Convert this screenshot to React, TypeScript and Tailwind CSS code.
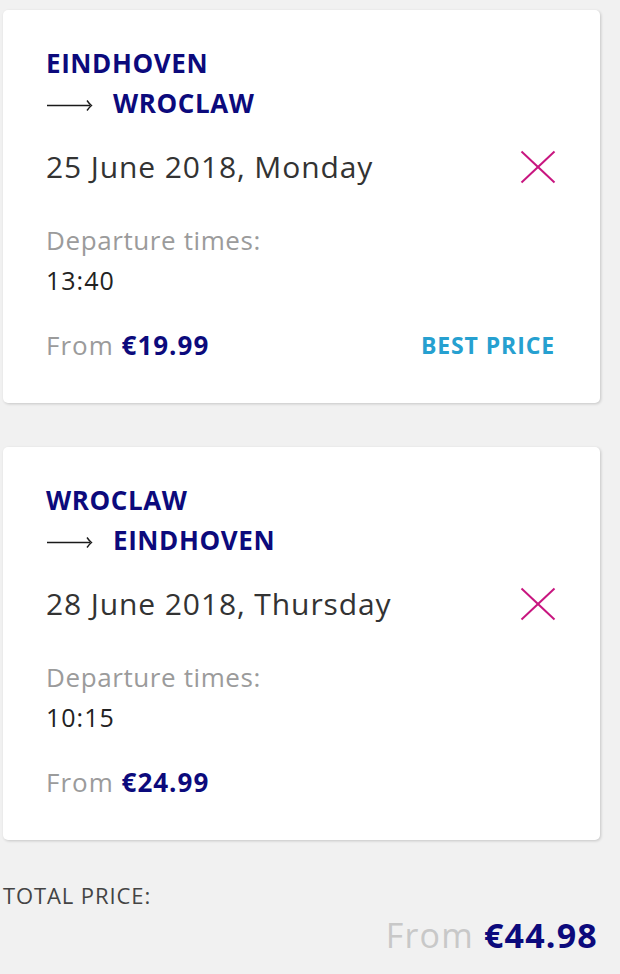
import React from "react";

function Arrow() {
  return (
    <svg width="47" height="14" viewBox="0 0 47 14" className="mr-[20px] shrink-0 mt-[4px]">
      <line x1="1" y1="7.5" x2="44" y2="7.5" stroke="#1a1a1a" strokeWidth="1.6" />
      <path d="M41 2.5 Q43 5.5 45.5 7.5 Q43 9.5 41 12.5" stroke="#1a1a1a" strokeWidth="1.4" fill="none" />
    </svg>
  );
}

function XIcon() {
  return (
    <svg width="36" height="34" viewBox="0 0 36 34" className="-mr-[1px]">
      <line x1="1.5" y1="1.5" x2="34.5" y2="32.5" stroke="#c8157f" strokeWidth="2" />
      <line x1="34.5" y1="1.5" x2="1.5" y2="32.5" stroke="#c8157f" strokeWidth="2" />
    </svg>
  );
}

function Card({
  from,
  to,
  date,
  time,
  price,
  best,
}: {
  from: string;
  to: string;
  date: string;
  time: string;
  price: string;
  best?: boolean;
}) {
  return (
    <div className="ml-[3px] w-[597px] h-[393px] bg-white rounded-[5px] shadow-[1px_1px_3px_rgba(0,0,0,0.18)] pl-[43px] pr-[45px] pt-[33px]">
      <div className="text-[26px] leading-[40px] font-bold text-[#0c0a7c] tracking-[0.6px]">{from}</div>
      <div className="flex items-center text-[26px] leading-[40px] font-bold text-[#0c0a7c] tracking-[0.6px]">
        <Arrow />
        <span>{to}</span>
      </div>
      <div className="mt-[24px] h-[40px] flex items-center justify-between">
        <span className="text-[30px] leading-[40px] text-[#333] tracking-[0.9px]">{date}</span>
        <XIcon />
      </div>
      <div className="mt-[35px] text-[26px] leading-[36px] text-[#9b9b9b] tracking-[0.6px]">Departure times:</div>
      <div className="mt-[4px] text-[25px] leading-[36px] text-[#222] tracking-[1px]">{time}</div>
      <div className="mt-[29px] h-[36px] flex items-center justify-between">
        <span className="text-[26px] leading-[36px] text-[#9b9b9b] tracking-[1px]">
          From <span className="font-bold text-[#0c0a7c]">{price}</span>
        </span>
        {best && (
          <span className="text-[23px] leading-[36px] font-bold text-[#26a0d0] tracking-[0.9px]">BEST PRICE</span>
        )}
      </div>
    </div>
  );
}

export default function App() {
  return (
    <div
      className="w-[620px] h-[974px] bg-[#f1f1f1] pt-[10px] overflow-hidden"
      style={{ fontFamily: "'Open Sans', Lato, sans-serif" }}
    >
      <Card from="EINDHOVEN" to="WROCLAW" date="25 June 2018, Monday" time="13:40" price="€19.99" best />
      <div className="h-[44px]" />
      <Card from="WROCLAW" to="EINDHOVEN" date="28 June 2018, Thursday" time="10:15" price="€24.99" />
      <div className="mt-[42px] pl-[3px] text-[22px] leading-[26px] text-[#444] tracking-[0.9px]">TOTAL PRICE:</div>
      <div className="mt-[7px] pr-[22px] text-right text-[34px] leading-[40px] text-[#c8c8c8] tracking-[1.2px]">
        From <span className="font-bold text-[#0c0a7c]">€44.98</span>
      </div>
    </div>
  );
}
